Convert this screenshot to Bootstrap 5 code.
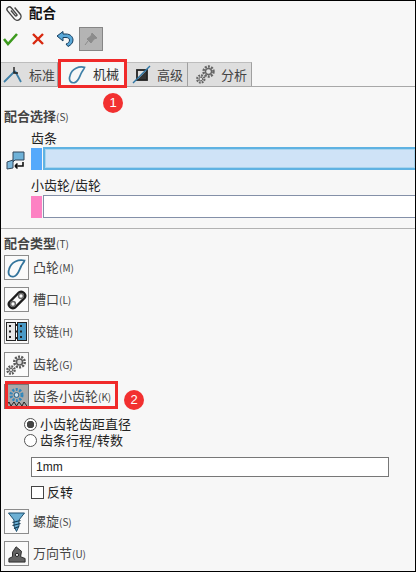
<!DOCTYPE html>
<html lang="zh-CN">
  <head>
    <meta charset="UTF-8" />
    <meta name="viewport" content="width=device-width, initial-scale=1.0" />
    <title>配合</title>
    <link href="https://cdn.jsdelivr.net/npm/bootstrap@5.3.0/dist/css/bootstrap.min.css" rel="stylesheet" />
    <style>
      html, body { margin: 0; background: #f7f7f7; }
      body { font-family: "Noto Sans CJK SC", "Liberation Sans", sans-serif; font-size: 13px; color: #222; line-height: 16px; }
      .pane { position: relative; width: 416px; height: 572px; border: 1px solid #000; background: #f7f7f7; overflow: hidden; }
      .title-row { height: 25px; padding: 0 0 3px 5px; }
      .title-txt { margin-left: 6px; font-size: 13.5px; font-weight: 700; color: #111; }
      .tool-row { height: 24px; margin-top: 1px; padding-left: 2px; }
      .tool-x { margin-left: 14px; }
      .tool-undo { margin-left: 12px; }
      .pin-btn { width: 24px; height: 24px; margin-left: 5px; background: #b4b4b4; border: 1px solid #868686; }
      .tab-row { height: 25px; margin-top: 11px; border-bottom: 1px solid #a8a8a8; }
      .pm-tab { height: 24px; background: #dedede; border-right: 1px solid #a0a0a0; border-top: 1px solid #bdbdbd; color: #444; }
      .pm-tab.on { background: #f7f7f7; border-top: 0; color: #333; }
      .tab-std { width: 57px; padding-left: 2px; gap: 7px; }
      .tab-mech { width: 69px; padding-left: 10px; gap: 7px; }
      .tab-adv { width: 61px; padding-left: 5px; gap: 6px; }
      .tab-ana { width: 64px; padding-left: 8px; gap: 6px; }
      .sec-head { height: 16px; margin-left: 3px; font-weight: 700; color: #444; }
      .sec-head small { font-size: 10px; font-weight: 400; }
      .head-sel { margin-top: 21px; }
      .head-type { margin-top: 6px; }
      .sel-name { height: 16px; margin-left: 30px; color: #222; }
      .name-a { margin-top: 6px; margin-bottom: 1px; }
      .name-b { margin-top: 7px; margin-bottom: 2px; }
      .sel-wrap { height: 23px; padding-left: 5px; }
      .sel-ico { width: 20px; height: 22px; margin-right: 5px; }
      .sel-gap { width: 25px; }
      .swatch { width: 11px; height: 22px; margin-right: 1px; }
      .swatch-blue { background: #55a9fb; }
      .swatch-pink { background: #fd81c3; }
      .sel-box { flex: 1; height: 23px; background: #fff; border: 1px solid #8490a8; margin-right: -2px; }
      .sel-box.live { background: #cfe3f7; border: 2px solid #5fb2e2; outline: 1px solid #a8d4ee; outline-offset: -3px; }
      .sect-line { height: 1px; margin-top: 10px; background: #b2b2b2; }
      .mate-row { height: 25px; margin-left: 3px; gap: 4px; color: #444; }
      .mate-ico { width: 25px; height: 25px; border: 1px solid #8c8c8c; background: #fafafa; }
      .mate-ico.on { background: #a9a9a9; border-color: #777; }
      .mate-row small { font-size: 10px; }
      .sp-4 { margin-top: 4px; }
      .sp-7 { margin-top: 7px; }
      .sp-8 { margin-top: 8px; }
      .sp-9 { margin-top: 9px; }
      .radio-row { height: 16px; margin-left: 23px; gap: 3px; color: #222; }
      .dot { width: 13px; height: 13px; border: 1px solid #555; border-radius: 50%; background: #fff; }
      .dot.on { background: radial-gradient(circle, #444 0 3.5px, #fff 4px); }
      .dist-box { width: 358px; height: 20px; margin-left: 30px; padding-left: 4px; background: #fff; border: 1px solid #777; font: 12px/18px "Liberation Sans", sans-serif; color: #222; }
      .chk-row { height: 16px; margin-left: 30px; gap: 3px; color: #222; }
      .chk { width: 13px; height: 13px; background: #fff; border: 1px solid #444; }
      .hi-box { position: absolute; border: 3px solid #f02a2a; }
      .hi-tab { left: 57px; top: 58px; width: 69px; height: 29px; }
      .hi-rack { left: 4px; top: 380px; width: 113px; height: 28px; }
      .num-dot { position: absolute; width: 20px; height: 20px; border-radius: 50%; background: #f23030; color: #fff; font: 13px/20px "Liberation Sans", sans-serif; text-align: center; }
      .num-a { left: 102px; top: 92px; }
      .num-b { left: 123px; top: 389px; }
    </style>
  </head>
  <body>
    <div class="pane">
      <div class="title-row d-flex align-items-center">
        <svg width="17" height="19" viewBox="0 0 17 20" fill="none" stroke="#444" stroke-width="1.500"><path transform="rotate(-40 8.500 10)" d="M12 6V15A4 4 0 0 1 4 15V4A2.500 2.500 0 0 1 9 4V13A1 1 0 0 1 7 13V6" /></svg>
        <span class="title-txt">配合</span>
      </div>
      <div class="tool-row d-flex align-items-center">
        <svg width="15" height="14" viewBox="0 0 15 14" fill="none"><path d="M1 7 5 12 14 2" stroke="#3d9a1e" stroke-width="2.600" /></svg>
        <svg class="tool-x" width="12" height="12" viewBox="0 0 12 12" fill="none"><path d="M1 1 11 11M11 1 1 11" stroke="#d8280f" stroke-width="2.400" /></svg>
        <svg class="tool-undo" width="18" height="16" viewBox="0 0 18 16"><path d="M1 5 7 .5V3H10C14.500 3 17 6 17 9 17 12 15 14 12 15.500L10 13C12 12.500 13.500 11 13.500 9 13.500 7.500 12 6.500 10 6.500H7V10Z" fill="#5aa8d8" stroke="#163e5f" /></svg>
        <div class="pin-btn d-flex align-items-center justify-content-center">
          <svg width="14" height="14" viewBox="0 0 14 14"><path d="M8 1 13 6 10 7 7 11 3 7 7 4ZM4 9 1 13" fill="#8c8c8c" stroke="#8c8c8c" /></svg>
        </div>
      </div>
      <div class="tab-row d-flex">
        <div class="pm-tab tab-std d-flex align-items-center">
          <svg width="19" height="18" viewBox="0 0 19 18" fill="none"><path d="M1 16 12 5M12 5 18 16" stroke="#3f80a8" stroke-width="1.800" /><path d="M11 1V7H15" stroke="#222" stroke-width="1.400" /></svg>
          <span>标准</span>
        </div>
        <div class="pm-tab tab-mech on d-flex align-items-center">
          <svg width="18" height="19" viewBox="0 0 19 19" fill="none"><path d="M17.500 2C12 .5 4 3 2 11 .5 16 3 19 7 18 11 17 12 12 14 8 15 6 17 4 17.500 2Z" stroke="#3f80a8" stroke-width="1.800" /></svg>
          <span>机械</span>
        </div>
        <div class="pm-tab tab-adv d-flex align-items-center">
          <svg width="19" height="19" viewBox="0 0 19 19" fill="none"><path d="M15 5 5 15H15Z" fill="#333" /><rect x="5" y="5" width="10" height="10" stroke="#222" stroke-width="1.800" /><path d="M1 18 18 1" stroke="#2e74a2" stroke-width="1.500" /></svg>
          <span>高级</span>
        </div>
        <div class="pm-tab tab-ana d-flex align-items-center">
          <svg width="19" height="19" viewBox="0 0 19 19" fill="none" stroke="#666"><circle cx="12.500" cy="6.500" r="5" stroke-width="2.400" stroke-dasharray="2 1.200" /><circle cx="12.500" cy="6.500" r="3" fill="#e4e4e4" stroke-width="1.400" /><circle cx="4.800" cy="14" r="3.600" stroke-width="2.200" stroke-dasharray="1.800 1" /><circle cx="4.800" cy="14" r="1.800" fill="#e4e4e4" /></svg>
          <span>分析</span>
        </div>
      </div>

      <div class="sec-head head-sel">配合选择<small>(S)</small></div>
      <div class="sel-name name-a">齿条</div>
      <div class="sel-wrap d-flex align-items-center">
        <svg class="sel-ico" viewBox="0 0 20 22" fill="none"><path d="M7 4H18V12H9L7 14Z" fill="#6fb2d8" stroke="#33475a" /><path d="M1 14 7 12V20L1 21Z" fill="#7cb8dc" stroke="#33475a" /><path d="M9 18H17V14M9 18 11.500 15.500M9 18 11.500 20.500" stroke="#111" stroke-width="1.600" /></svg>
        <div class="swatch swatch-blue"></div>
        <div class="sel-box live"></div>
      </div>
      <div class="sel-name name-b">小齿轮/齿轮</div>
      <div class="sel-wrap d-flex align-items-center">
        <div class="sel-gap"></div>
        <div class="swatch swatch-pink"></div>
        <div class="sel-box"></div>
      </div>
      <div class="sect-line"></div>
      <div class="sec-head head-type">配合类型<small>(T)</small></div>

      <div class="mate-row sp-4 d-flex align-items-center">
        <div class="mate-ico d-flex align-items-center justify-content-center"><svg width="19" height="20" viewBox="0 0 19 19" fill="none"><path d="M17.500 2C12 .5 4 3 2 11 .5 16 3 19 7 18 11 17 12 12 14 8 15 6 17 4 17.500 2Z" stroke="#33749c" stroke-width="1.800" /></svg></div>
        <span>凸轮<small>(M)</small></span>
      </div>
      <div class="mate-row sp-7 d-flex align-items-center">
        <div class="mate-ico d-flex align-items-center justify-content-center"><svg width="20" height="20" viewBox="0 0 20 20" fill="none"><path d="M2.500 12 12 2.500C15.500 0 20 4.500 17.500 8L8 17.500C4.500 20 0 15.500 2.500 12Z" stroke="#1c1c1c" stroke-width="2.400" /><circle cx="14" cy="6" r="2.400" stroke="#666" stroke-width="1.500" /><circle cx="6" cy="14" r="2.400" stroke="#666" stroke-width="1.500" /></svg></div>
        <span>槽口<small>(L)</small></span>
      </div>
      <div class="mate-row sp-7 d-flex align-items-center">
        <div class="mate-ico d-flex align-items-center justify-content-center"><svg width="21" height="19" viewBox="0 0 21 19"><rect x=".5" y=".5" width="9" height="18" fill="#e8e8e8" stroke="#222" /><rect x="11.500" y=".5" width="9" height="18" fill="#4b9ac6" stroke="#222" /><path d="M9.500 3H11.500M9.500 9.500H11.500M9.500 16H11.500" stroke="#222" stroke-width="2" /><path d="M3 4H7M3 9.500H7M3 15H7M14 4H18M14 9.500H18M14 15H18" stroke="#222" stroke-width="2" stroke-dasharray="2 2" /></svg></div>
        <span>铰链<small>(H)</small></span>
      </div>
      <div class="mate-row sp-8 d-flex align-items-center">
        <div class="mate-ico d-flex align-items-center justify-content-center"><svg width="21" height="20" viewBox="0 0 21 20" fill="none" stroke="#5c5c5c"><circle cx="13.500" cy="7" r="5.200" stroke-width="2.600" stroke-dasharray="2 1.200" /><circle cx="13.500" cy="7" r="3" fill="#dcdcdc" stroke-width="1.500" /><circle cx="5" cy="15" r="3.600" stroke-width="2.400" stroke-dasharray="1.800 1" /><circle cx="5" cy="15" r="1.800" fill="#dcdcdc" /></svg></div>
        <span>齿轮<small>(G)</small></span>
      </div>
      <div class="mate-row sp-7 d-flex align-items-center">
        <div class="mate-ico on d-flex align-items-center justify-content-center"><svg width="21" height="20" viewBox="0 0 21 20" fill="none"><circle cx="10.500" cy="8" r="5.500" stroke="#2f86bb" stroke-width="3" stroke-dasharray="2 1.500" /><circle cx="10.500" cy="8" r="2.400" fill="#cfe6f4" stroke="#1d5a80" /><path d="M0 19 3 15 5 19 8 15 10.500 19 13 15 16 19 18 15 21 19" stroke="#222" /></svg></div>
        <span>齿条小齿轮<small>(K)</small></span>
      </div>

      <div class="radio-row sp-7 d-flex align-items-center">
        <span class="dot on"></span><span>小齿轮齿距直径</span>
      </div>
      <div class="radio-row d-flex align-items-center">
        <span class="dot"></span><span>齿条行程/转数</span>
      </div>
      <div class="dist-box sp-9">1mm</div>
      <div class="chk-row sp-7 d-flex align-items-center">
        <span class="chk"></span><span>反转</span>
      </div>

      <div class="mate-row sp-9 d-flex align-items-center">
        <div class="mate-ico d-flex align-items-center justify-content-center"><svg width="17" height="20" viewBox="0 0 17 20"><path d="M.5 1H16.500L11 8V14L8.500 19.500 6 14V8Z" fill="#6db0d4" stroke="#1f4f6e" /><path d="M4.500 10.500 12.500 8.500M4.500 13.500 12.500 11.500M6 16.500 11 14.500" stroke="#12384f" stroke-width="1.200" /></svg></div>
        <span>螺旋<small>(S)</small></span>
      </div>
      <div class="mate-row sp-7 d-flex align-items-center">
        <div class="mate-ico d-flex align-items-center justify-content-center"><svg width="18" height="20" viewBox="0 0 20 20"><path d="M1 19V15L5 13V8L9 2 15 7 14 13 19 15V19Z" fill="#626262" stroke="#222" /><circle cx="10" cy="11" r="1.800" fill="#f0f0f0" stroke="#111" /></svg></div>
        <span>万向节<small>(U)</small></span>
      </div>

      <div class="hi-box hi-tab"></div>
      <div class="num-dot num-a">1</div>
      <div class="hi-box hi-rack"></div>
      <div class="num-dot num-b">2</div>
    </div>
    <script src="https://cdn.jsdelivr.net/npm/bootstrap@5.3.0/dist/js/bootstrap.bundle.min.js"></script>
  </body>
</html>
